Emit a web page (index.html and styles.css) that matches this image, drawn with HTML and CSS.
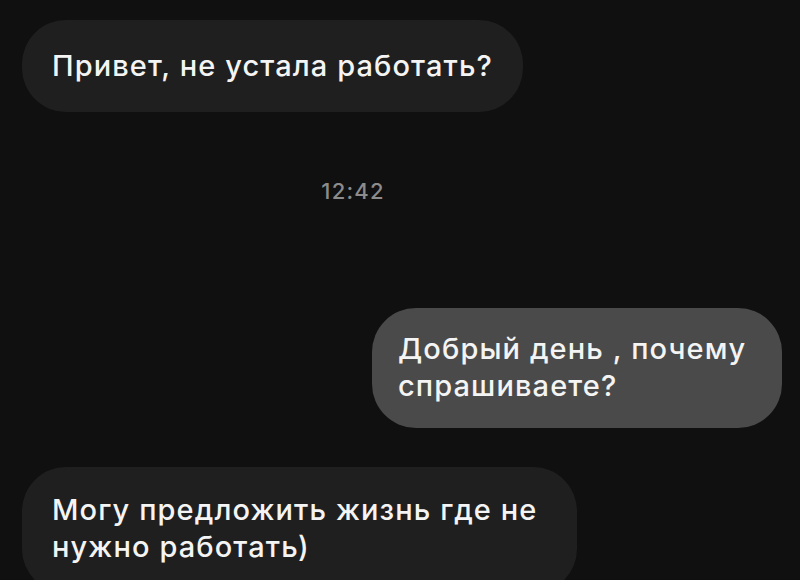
FILE: index.html
```html
<!DOCTYPE html>
<html>
<head>
    <link rel="stylesheet" href="styles.css">
</head>
<body>
    <div class="chat">
        <div class="msg in">Привет, не устала работать?</div>
        <div class="time">12:42</div>
        <div class="msg out">Добрый день , почему спрашиваете?</div>
        <div class="msg in wide">Могу предложить жизнь где не нужно работать)</div>
    </div>
</body>
</html>
```

FILE: styles.css
```css
body {
    margin: 0;
    background: #101010;
    font-family: Inter, "Noto Sans", sans-serif;
    color: #f4f4f4;
    height: 580px;
    overflow: hidden;
}
.chat {
    display: flex;
    flex-direction: column;
    align-items: flex-start;
    padding: 20px 18px 0 22px;
}
.msg {
    box-sizing: border-box;
    font-size: 29px;
    font-weight: 500;
    letter-spacing: 1.1px;
    line-height: 37px;
    padding: 27px 30px 28px;
    border-radius: 44px;
}
.in {
    background: #1f1f1f;
    max-width: 555px;
}
.out {
    background: #4a4a4a;
    align-self: flex-end;
    max-width: 410px;
    padding: 22px 30px 24px 26px;
    margin-top: 105px;
}
.wide {
    margin-top: 39px;
    padding-top: 24px;
}
.time {
    align-self: stretch;
    text-align: center;
    padding-right: 98px;
    margin-top: 67px;
    font-size: 22px;
    font-weight: 500;
    letter-spacing: 1.2px;
    line-height: 24px;
    color: #8c8c8c;
}
```
